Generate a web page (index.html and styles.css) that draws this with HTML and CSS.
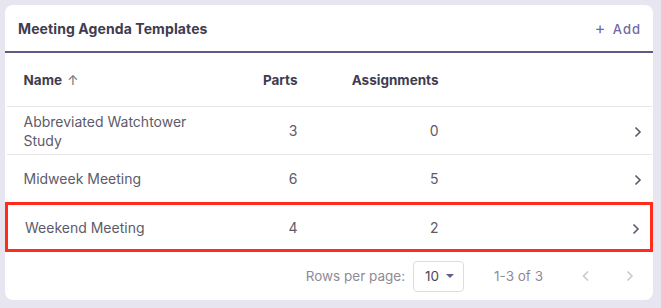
FILE: index.html
```html
<!DOCTYPE html>
<html lang="en">
<head>
    <meta charset="UTF-8">
    <meta name="viewport" content="width=device-width, initial-scale=1.0">
    <title>Meeting Agenda Templates</title>
    <link rel="stylesheet" href="styles.css">
</head>
<body>
    <div class="card">
        <div class="card-header">
            <h2>Meeting Agenda Templates</h2>
            <button class="add-btn"><span class="plus">+</span> Add</button>
        </div>
        <table class="templates">
            <colgroup>
                <col class="w-name">
                <col class="w-parts">
                <col class="w-assign">
                <col>
            </colgroup>
            <thead>
                <tr>
                    <th class="col-name">Name <span class="sort">&#8593;</span></th>
                    <th class="col-num">Parts</th>
                    <th class="col-num">Assignments</th>
                    <th class="col-go"></th>
                </tr>
            </thead>
            <tbody>
                <tr>
                    <td class="col-name">Abbreviated Watchtower<br>Study</td>
                    <td class="col-num">3</td>
                    <td class="col-num">0</td>
                    <td class="col-go"><svg class="chev" width="8" height="12" viewBox="0 0 8 12"><path d="M1.5 1.5 L6 6 L1.5 10.5" /></svg></td>
                </tr>
                <tr>
                    <td class="col-name">Midweek Meeting</td>
                    <td class="col-num">6</td>
                    <td class="col-num">5</td>
                    <td class="col-go"><svg class="chev" width="8" height="12" viewBox="0 0 8 12"><path d="M1.5 1.5 L6 6 L1.5 10.5" /></svg></td>
                </tr>
                <tr class="selected">
                    <td class="col-name">Weekend Meeting</td>
                    <td class="col-num">4</td>
                    <td class="col-num">2</td>
                    <td class="col-go"><svg class="chev" width="8" height="12" viewBox="0 0 8 12"><path d="M1.5 1.5 L6 6 L1.5 10.5" /></svg></td>
                </tr>
            </tbody>
        </table>
        <div class="pager">
            <span class="pager-label">Rows per page:</span>
            <div class="rows-select">10 <span class="caret"></span></div>
            <span class="pager-range">1-3 of 3</span>
            <svg class="chev chev-off" width="8" height="12" viewBox="0 0 8 12"><path d="M6 1.5 L1.5 6 L6 10.5" /></svg>
            <svg class="chev chev-off" width="8" height="12" viewBox="0 0 8 12"><path d="M1.5 1.5 L6 6 L1.5 10.5" /></svg>
        </div>
    </div>
</body>
</html>
```

FILE: styles.css
```css
body {
    margin: 0;
    padding: 5px 8px 8px 5px;
    background-color: #e7e5ef;
    font-family: Inter, "Open Sans", sans-serif;
    color: #5d5b69;
}
.card {
    background-color: white;
    border-radius: 8px;
    overflow: hidden;
}
.card-header {
    display: flex;
    justify-content: space-between;
    align-items: center;
    height: 46px;
    padding: 0 12px 0 13px;
    border-bottom: 2px solid #5e5986;
}
.card-header h2 {
    margin: 0;
    font-size: 14px;
    font-weight: 700;
    letter-spacing: 0.1px;
    color: #3f3c4f;
}
.add-btn {
    font-family: inherit;
    font-size: 13px;
    font-weight: 500;
    letter-spacing: 1px;
    color: #6f6ba3;
    background: none;
    border: none;
    padding: 0;
}
.add-btn .plus {
    font-size: 16px;
    font-weight: 400;
    margin-right: 2px;
}
.templates {
    width: 100%;
    table-layout: fixed;
    border-collapse: collapse;
    font-size: 14px;
}
.w-name {
    width: 236px;
}
.w-parts {
    width: 55px;
}
.w-assign {
    width: 141px;
}
.templates th,
.templates td {
    padding: 0;
}
.templates th {
    height: 53px;
    font-size: 13.5px;
    font-weight: 700;
    color: #3f3c4f;
    border-bottom: 1px solid #e6e5ea;
}
.templates td {
    height: 47px;
    border-bottom: 1px solid #e6e5ea;
    line-height: 19px;
}
.col-name {
    text-align: left;
    padding-left: 17px !important;
}
.col-num {
    text-align: right;
}
.col-go {
    text-align: right;
    padding-right: 10px !important;
}
.sort {
    font-weight: 400;
    color: #6f6d7a;
    margin-left: 2px;
}
.chev {
    fill: none;
    stroke: #5b5966;
    stroke-width: 1.6;
    vertical-align: middle;
}
.selected td {
    border-top: 3px solid #ff2b1c;
    border-bottom: 3px solid #ff2b1c;
    height: 44px;
}
.selected td:first-child {
    border-left: 3px solid #ff2b1c;
}
.selected td:last-child {
    border-right: 3px solid #ff2b1c;
}
.pager {
    display: flex;
    justify-content: flex-end;
    align-items: center;
    height: 48px;
    padding-right: 19px;
    font-size: 13.5px;
    color: #8d8b96;
}
.rows-select {
    display: flex;
    align-items: center;
    justify-content: space-between;
    width: 51px;
    height: 31px;
    box-sizing: border-box;
    padding: 0 9px 0 11px;
    margin: 0 30px 0 8px;
    border: 1px solid #dddce2;
    border-radius: 4px;
    color: #4a4856;
}
.caret {
    width: 0;
    height: 0;
    border-left: 4px solid transparent;
    border-right: 4px solid transparent;
    border-top: 4px solid #5f5b96;
}
.pager-range {
    margin-right: 39px;
}
.chev-off {
    stroke: #c9c8d0;
    margin-left: 36px;
}
.pager-range + .chev-off {
    margin-left: 0;
}
```
